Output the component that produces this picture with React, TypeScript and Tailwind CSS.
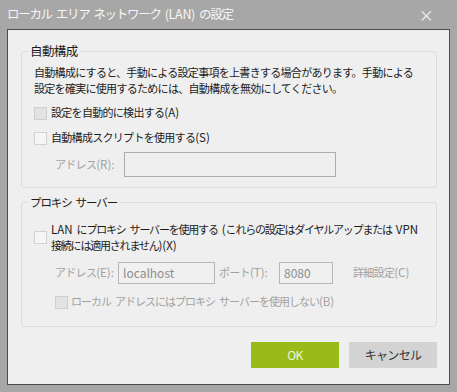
import React from 'react';

const font = { fontFamily: '"Noto Sans CJK JP", "Noto Sans", sans-serif' };

type BoxProps = { variant?: 'disabled' | 'normal' };

const CheckBox: React.FC<BoxProps> = ({ variant = 'normal' }) => (
  <span
    className={
      variant === 'disabled'
        ? 'block h-[13px] w-[13px] shrink-0 border border-[#cfcfcf] bg-[#e3e3e3]'
        : 'block h-[13px] w-[13px] shrink-0 border border-[#d2d2d2] bg-[#f5f5f5]'
    }
  />
);

// latin bits render a bit wider in the original UI font
const L: React.FC<{ children: React.ReactNode }> = ({ children }) => (
  <span className="text-[11.5px] tracking-normal">{children}</span>
);

// the CJK font's space is very thin, so use a fixed gap instead
const Sp = () => <span className="inline-block w-[4px]" />;

export default function App() {
  return (
    <div
      className="flex h-[392px] w-[457px] flex-col bg-[#a7a7a7] text-[11px] tracking-[-0.7px]"
      style={font}
    >
      {/* title bar */}
      <div className="flex h-[29px] shrink-0 items-center justify-between pl-[7px] pr-[24px]">
        <span className="text-[12.5px] tracking-[-1.3px] text-[#f6f6f6]">
          ローカル<Sp />エリア<Sp />ネットワーク<Sp />
          <span className="tracking-[-0.3px]">(LAN)</span>
          <Sp />の設定
        </span>
        <span className="text-[15px] leading-none text-[#f6f6f6]">×</span>
      </div>

      {/* client area */}
      <div className="mx-[7px] mb-[7px] flex flex-1 flex-col border border-[#4c4c4c] bg-[#efefef] pl-[13px] pr-[12px] pt-[13px] text-[#1c1c1c]">
        <fieldset className="rounded-[3px] border border-[#d9dde2] pb-[10px] pl-[12px] pr-[12px]">
          <legend className="-ml-[6px] px-[2px] text-[12.5px] leading-[16px] tracking-[-0.6px]">自動構成</legend>
          <p className="mt-[5px] leading-[16px]">
            自動構成にすると、手動による設定事項を上書きする場合があります。手動による
            <br />
            設定を確実に使用するためには、自動構成を無効にしてください。
          </p>
          <label className="mt-[9px] flex h-[16px] items-center gap-[4px]">
            <CheckBox variant="disabled" />
            <span>
              設定を自動的に検出する<L>(A)</L>
            </span>
          </label>
          <label className="mt-[9px] flex h-[16px] items-center gap-[4px]">
            <CheckBox />
            <span>
              自動構成スクリプトを使用する<L>(S)</L>
            </span>
          </label>
          <div className="mt-[6px] flex items-center pl-[21px]">
            <span className="w-[69px] text-[#a2a2a2]">
              アドレス<L>(R):</L>
            </span>
            <div className="h-[25px] w-[212px] border border-[#acacac] bg-[#efefef]" />
          </div>
        </fieldset>

        <fieldset className="mt-[6px] rounded-[3px] border border-[#d9dde2] pb-[16px] pl-[12px] pr-[12px]">
          <legend className="-ml-[6px] px-[2px] text-[11.5px] leading-[16px] tracking-[-1.1px]">
            プロキシ<Sp />サーバー
          </legend>
          <label className="mt-[11px] flex items-center gap-[4px]">
            <CheckBox />
            <span className="leading-[16px] tracking-[-1.2px]">
              <L>LAN</L>
              <Sp />
              にプロキシ<Sp />サーバーを使用する<Sp />
              <L>(</L>これらの設定はダイヤルアップまたは<Sp />
              <L>VPN</L>
              <br />
              接続には適用されません<L>)(X)</L>
            </span>
          </label>
          <div className="mt-[9px] flex items-center pl-[21px] text-[#a2a2a2]">
            <span className="w-[63px]">
              アドレス<L>(E):</L>
            </span>
            <div className="flex h-[22px] w-[97px] items-center border border-[#b7b7b7] bg-[#f0f0f0] px-[4px] text-[12px] tracking-normal text-[#8d8d8d]">
              localhost
            </div>
            <span className="ml-[4px] w-[60px]">
              ポート<L>(T):</L>
            </span>
            <div className="flex h-[22px] w-[54px] items-center border border-[#b7b7b7] bg-[#f0f0f0] px-[4px] text-[12px] tracking-normal text-[#8d8d8d]">
              8080
            </div>
            <span className="ml-[20px]">
              詳細設定<L>(C)</L>
            </span>
          </div>
          <label className="mt-[10px] flex h-[16px] items-center gap-[3px] pl-[21px] text-[#a2a2a2]">
            <CheckBox variant="disabled" />
            <span className="tracking-[-1px]">
              ローカル<Sp />アドレスにはプロキシ<Sp />サーバーを使用しない<L>(B)</L>
            </span>
          </label>
        </fieldset>

        <div className="mt-[15px] flex justify-end gap-[10px]">
          <button className="h-[26px] w-[88px] bg-[#98bb1a] text-[12px] text-[#eef5dc]">OK</button>
          <button className="h-[26px] w-[88px] bg-[#d3d3d3] text-[12px] text-[#333333]">キャンセル</button>
        </div>
      </div>
    </div>
  );
}
